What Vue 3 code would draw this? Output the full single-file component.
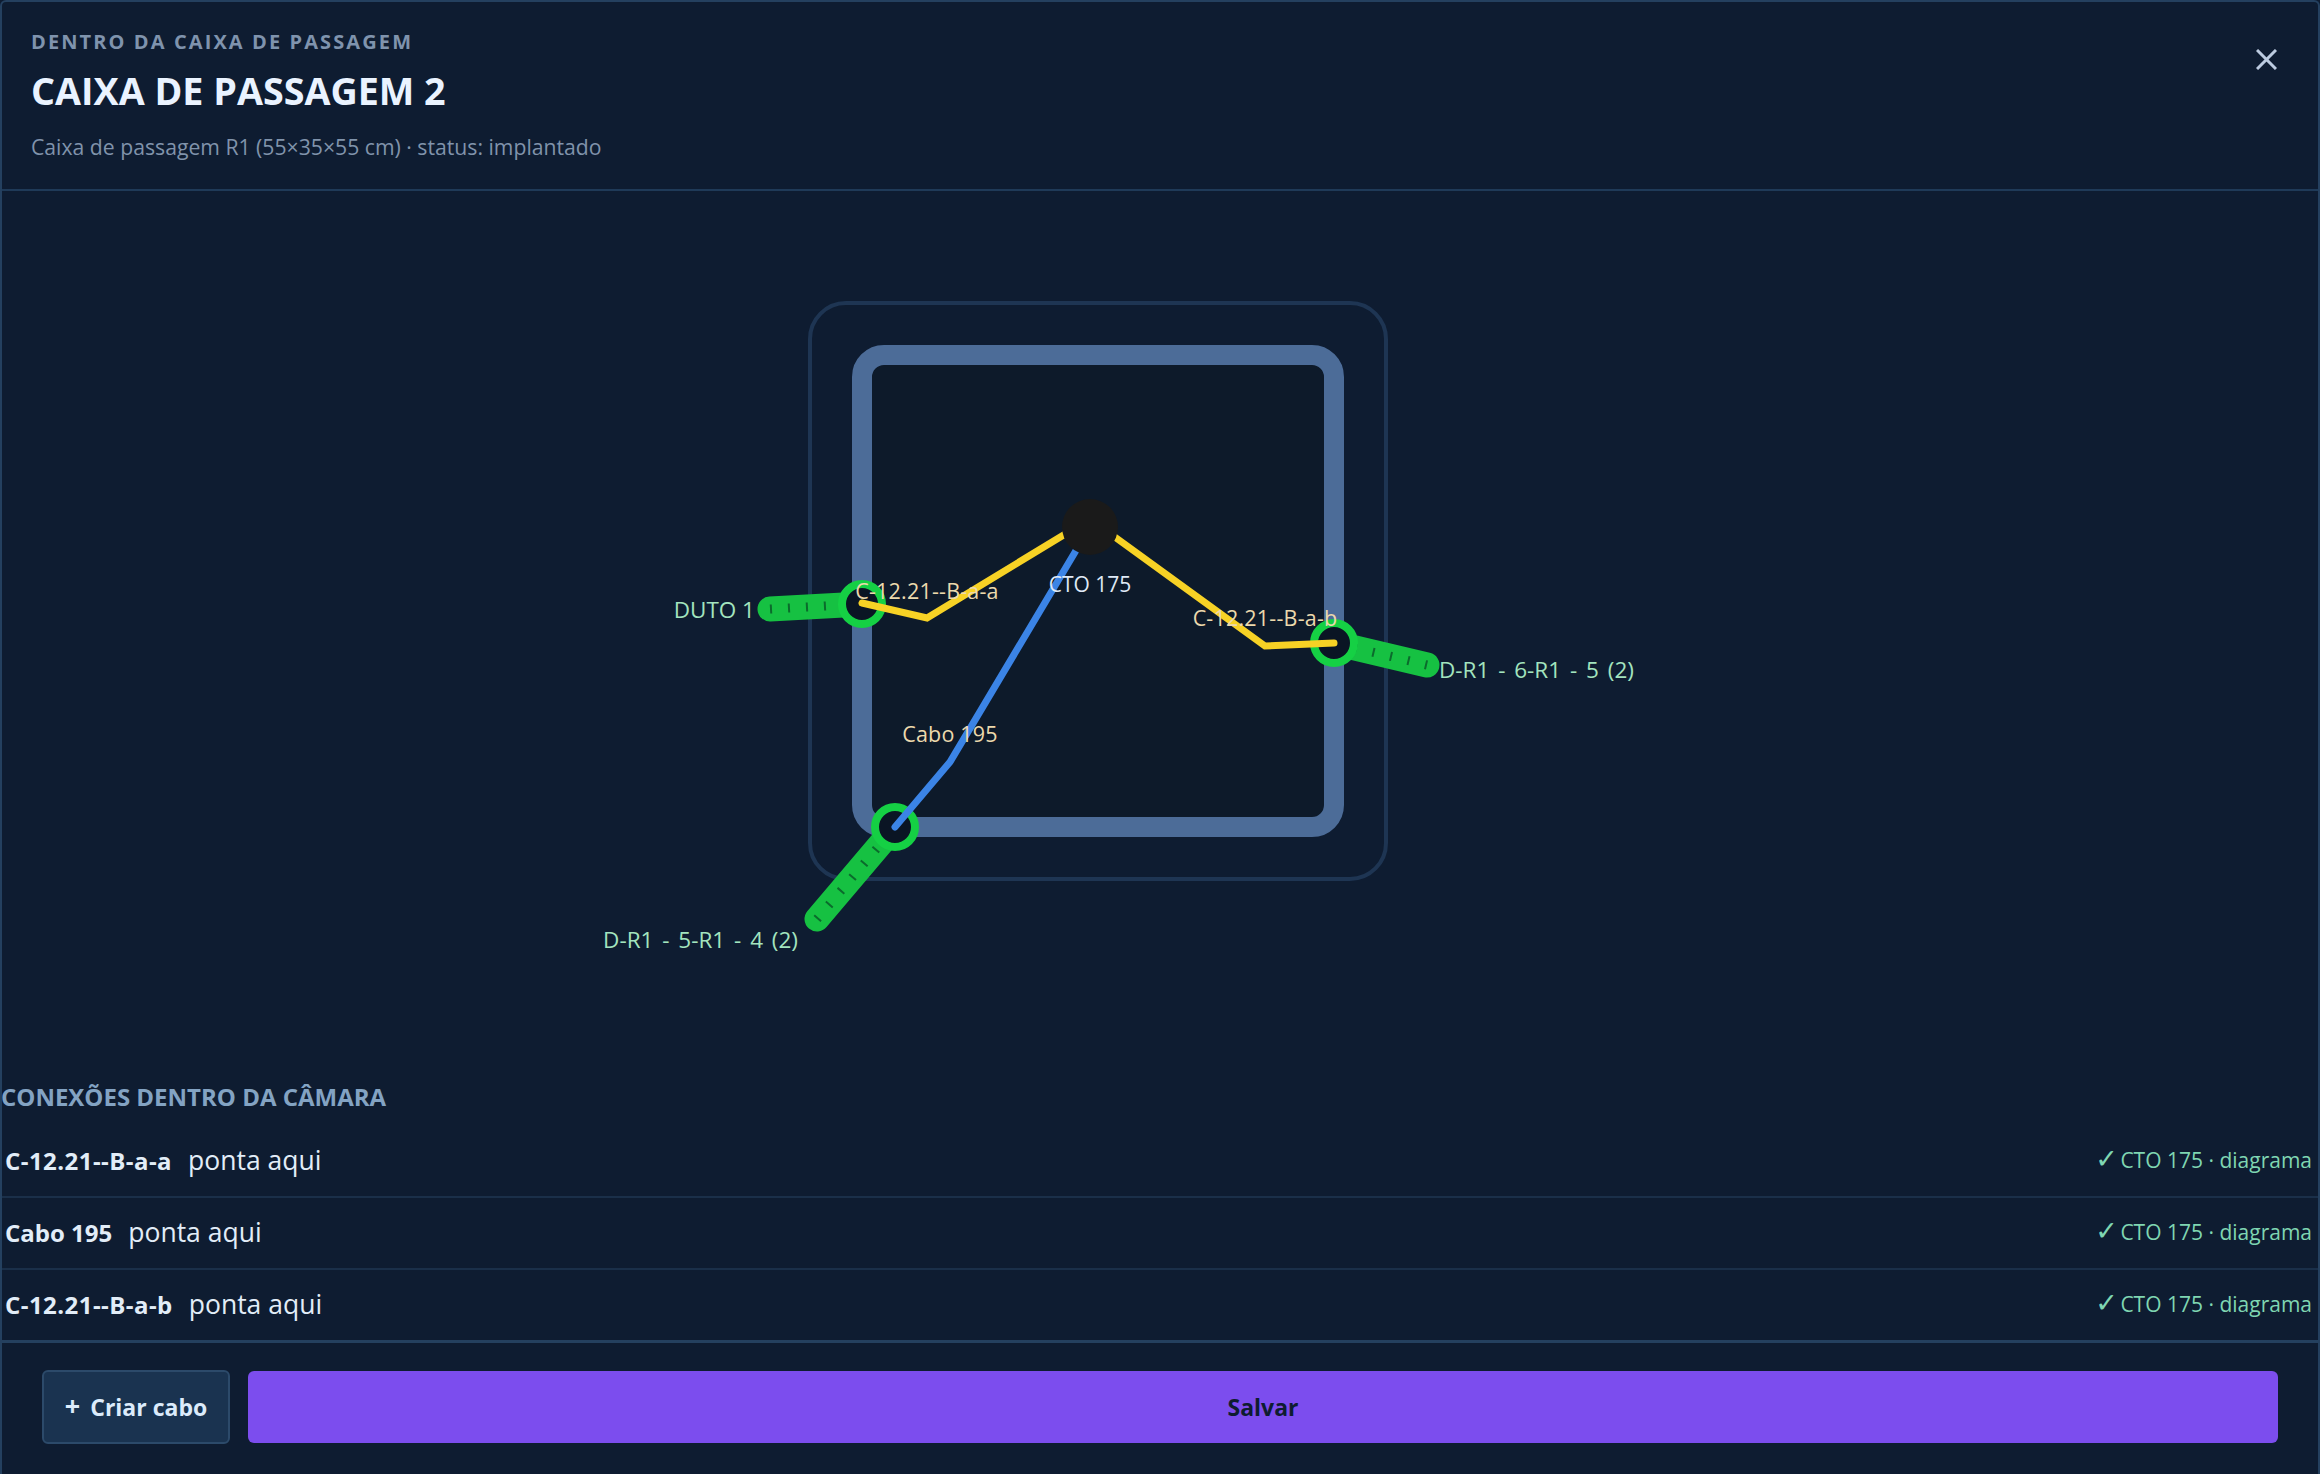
<script setup>
const connections = [
  { name: 'C-12.21--B-a-a', dashed: true },
  { name: 'Cabo 195', dashed: false },
  { name: 'C-12.21--B-a-b', dashed: true },
]

const ducts = [
  { id: 1, x1: 770, y1: 609, x2: 862, y2: 604 },
  { id: 2, x1: 817, y1: 919, x2: 895, y2: 827 },
  { id: 3, x1: 1427, y1: 665, x2: 1334, y2: 643 },
]
</script>

<template>
  <div class="panel">
    <header class="head">
      <div>
        <div class="eyebrow">DENTRO DA CAIXA DE PASSAGEM</div>
        <h1 class="title">CAIXA DE PASSAGEM 2</h1>
        <div class="sub">Caixa de passagem R1 (55×35×55 cm) · status: implantado</div>
      </div>
      <svg class="close" width="21" height="21" viewBox="0 0 21 21">
        <path d="M1 1 L20 20 M20 1 L1 20" stroke="#bccbe0" stroke-width="3" />
      </svg>
    </header>

    <div class="canvas">
      <svg width="2320" height="880" viewBox="0 191 2320 880">
        <rect x="810" y="303" width="576" height="576" rx="36" fill="none" stroke="#1e3553" stroke-width="4" />
        <rect x="862" y="355" width="472" height="472" rx="22" fill="#0d1a2a" stroke="#4c6c98" stroke-width="20" />

        <g v-for="d in ducts" :key="d.id">
          <line :x1="d.x1" :y1="d.y1" :x2="d.x2" :y2="d.y2" stroke="#16c142" stroke-width="25" stroke-linecap="round" />
          <line :x1="d.x1" :y1="d.y1" :x2="d.x2" :y2="d.y2" stroke="#0b6b2c" stroke-width="9" stroke-dasharray="2 16" />
        </g>

        <circle cx="862" cy="604" r="20" fill="#0a1524" stroke="#15d044" stroke-width="8" />
        <circle cx="895" cy="827" r="20" fill="#0a1524" stroke="#15d044" stroke-width="8" />
        <circle cx="1334" cy="643" r="20" fill="#0a1524" stroke="#15d044" stroke-width="8" />

        <polyline points="862,603 927,618 1090,519" fill="none" stroke="#f7d225" stroke-width="7" stroke-linecap="round" />
        <polyline points="1090,519 1265,646 1334,643" fill="none" stroke="#f7d225" stroke-width="7" stroke-linecap="round" />
        <polyline points="895,827 950,762 1090,527" fill="none" stroke="#3b84e6" stroke-width="7" stroke-linecap="round" />

        <circle cx="1090" cy="527" r="28" fill="#1a1a1a" />

        <text x="927" y="599" class="lbl cable" text-anchor="middle">C-12.21--B-a-a</text>
        <text x="1265" y="626" class="lbl cable" text-anchor="middle">C-12.21--B-a-b</text>
        <text x="950" y="742" class="lbl cable" text-anchor="middle">Cabo 195</text>
        <text x="1090" y="592" class="lbl cto" text-anchor="middle">CTO 175</text>
        <text x="755" y="618" class="lbl duct" text-anchor="end">DUTO 1</text>
        <text x="1439" y="678" class="lbl duct wide">D-R1 - 6-R1 - 5 (2)</text>
        <text x="798" y="948" class="lbl duct wide" text-anchor="end">D-R1 - 5-R1 - 4 (2)</text>
      </svg>
    </div>

    <section class="conns">
      <div class="conns-title">CONEXÕES DENTRO DA CÂMARA</div>
      <div v-for="c in connections" :key="c.name" class="row">
        <div class="row-left"><b :class="{ dashed: c.dashed }">{{ c.name }}</b><span>ponta aqui</span></div>
        <div class="row-right"><i class="tick">✓</i> CTO 175 · diagrama</div>
      </div>
    </section>

    <footer class="foot">
      <button class="btn-new"><span class="plus">+</span>Criar cabo</button>
      <button class="btn-save">Salvar</button>
    </footer>
  </div>
</template>

<style>
html, body {
  margin: 0;
  background: #0e1c31;
}
</style>

<style scoped>
* {
  box-sizing: border-box;
}

.panel {
  width: 2320px;
  height: 1474px;
  display: flex;
  flex-direction: column;
  background: #0e1c31;
  border: 2px solid #24405f;
  border-bottom: none;
  border-radius: 6px 6px 0 0;
  font-family: "Open Sans", "Noto Sans", sans-serif;
  overflow: hidden;
}

.head {
  height: 189px;
  flex: none;
  display: flex;
  justify-content: space-between;
  padding: 28px 30px 0 29px;
  border-bottom: 2px solid #1f3a58;
}

.eyebrow {
  font-size: 20px;
  font-weight: 700;
  letter-spacing: 2.1px;
  line-height: 24px;
  color: #7f93ad;
}

.title {
  margin: 13px 0 0;
  font-size: 37.7px;
  font-weight: 700;
  line-height: 48px;
  color: #eaf3ff;
}

.sub {
  margin-top: 18px;
  font-size: 21.2px;
  line-height: 28px;
  color: #8093ab;
}

.close {
  margin: 19px 11px 0 0;
}

.canvas {
  height: 880px;
  flex: none;
}

.canvas svg {
  display: block;
  margin-left: -2px;
}

.lbl {
  font-family: "Open Sans", "Noto Sans", sans-serif;
  font-size: 21.5px;
}

.cable {
  fill: #ecd9ad;
  letter-spacing: 0.2px;
}

.cto {
  fill: #dfe9f6;
  font-size: 21px;
}

.duct {
  fill: #a3e4bf;
  font-size: 22.5px;
}

.wide {
  word-spacing: 3px;
}

.conns {
  flex: none;
}

.conns-title {
  font-size: 24px;
  font-weight: 700;
  line-height: 52px;
  margin: 0 0 3px -1px;
  color: #83a3c3;
}

.row {
  height: 72px;
  display: flex;
  justify-content: space-between;
  align-items: center;
  padding: 0 6px 2px 3px;
  border-bottom: 2px solid #1a2f49;
}

.row:last-child {
  height: 73px;
  padding-bottom: 2px;
  border-bottom: 3px solid #24405f;
}

.row-left b {
  font-size: 24px;
  color: #e2edf8;
  margin-right: 16px;
}

.row-left b.dashed {
  letter-spacing: 0.45px;
}

.row-left span {
  font-size: 26.5px;
  color: #e2edf8;
}

.row-right {
  font-size: 21px;
  color: #7fd6b2;
}

.tick {
  font-family: "DejaVu Sans", sans-serif;
  font-style: normal;
  font-size: 27px;
  line-height: 0;
  margin-right: -3px;
}

.foot {
  flex: 1;
  display: flex;
  align-items: center;
  gap: 18px;
  padding: 0 40px 3px;
}

.btn-new,
.btn-save {
  font-family: inherit;
  font-size: 23px;
  font-weight: 700;
  border-radius: 6px;
}

.btn-new {
  flex: none;
  width: 188px;
  height: 74px;
  background: #1a3350;
  color: #dcebfb;
  border: 2px solid #2c4a6a;
}

.plus {
  font-size: 27px;
  line-height: 0;
  margin-right: 10px;
}

.btn-save {
  flex: 1;
  height: 72px;
  background: #7c4dee;
  color: #0e1c30;
  border: none;
}
</style>
